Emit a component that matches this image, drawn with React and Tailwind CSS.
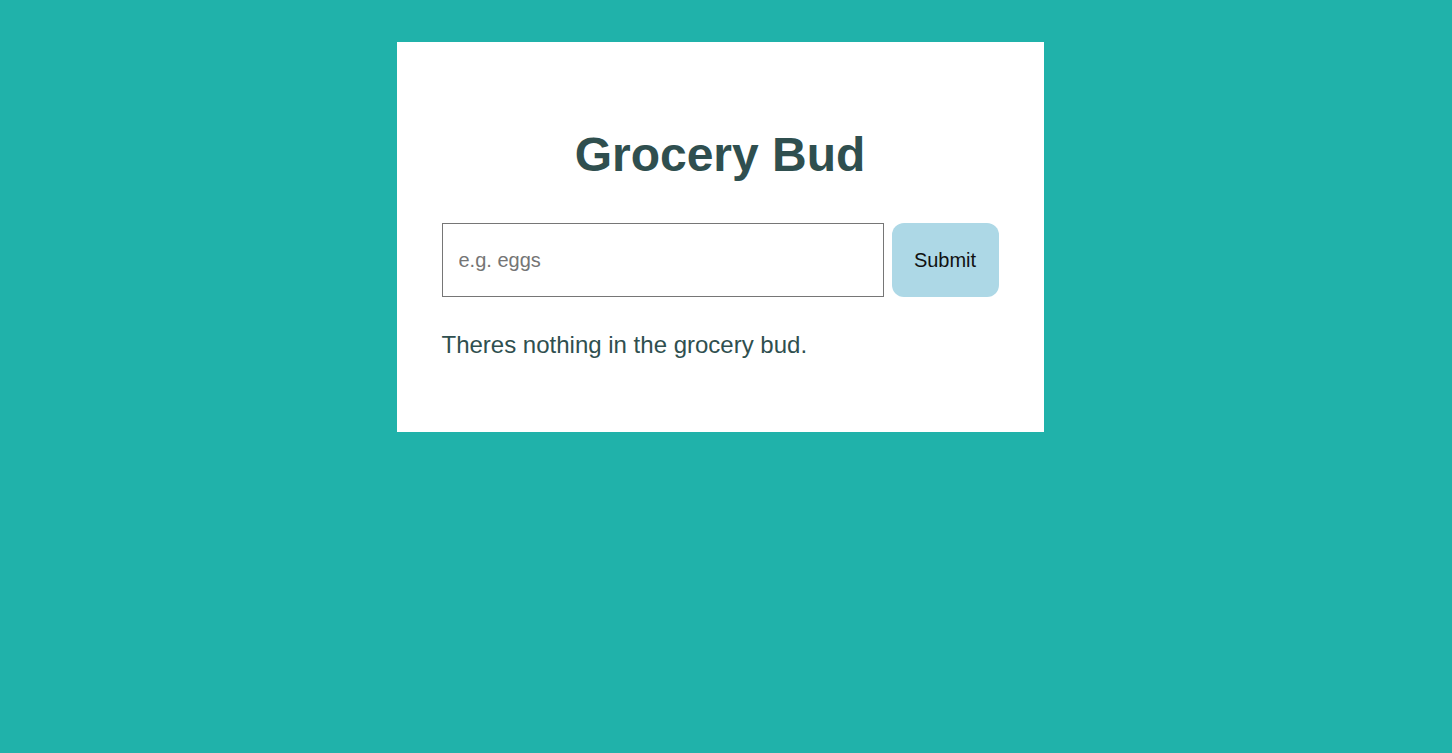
export default function App() {
  return (
    <div className="min-h-[753px] w-full bg-[#20b2aa] flex justify-center pr-[12px]" style={{ fontFamily: '"Liberation Sans", Arial, sans-serif' }}>
      <div className="mt-[42px] w-[647px] h-[390px] bg-white px-[45px] pt-[85px] self-start">
        <h1 className="text-[48px] leading-[56px] font-bold text-[#2f4f4f] text-center m-0">Grocery Bud</h1>
        <form className="flex gap-[8px] mt-[40px]" onSubmit={(e) => e.preventDefault()}>
          <input
            type="text"
            placeholder="e.g. eggs"
            className="w-[442px] h-[74px] border border-[#767676] px-[16px] text-[20px] text-black placeholder:text-[#757575] outline-none"
          />
          <button type="submit" className="w-[107px] h-[74px] rounded-[12px] bg-[#add8e6] text-[20px] text-[#111]">Submit</button>
        </form>
        <p className="mt-[34px] text-[24px] leading-[28px] text-[#2f4f4f]">Theres nothing in the grocery bud.</p>
      </div>
    </div>
  );
}
